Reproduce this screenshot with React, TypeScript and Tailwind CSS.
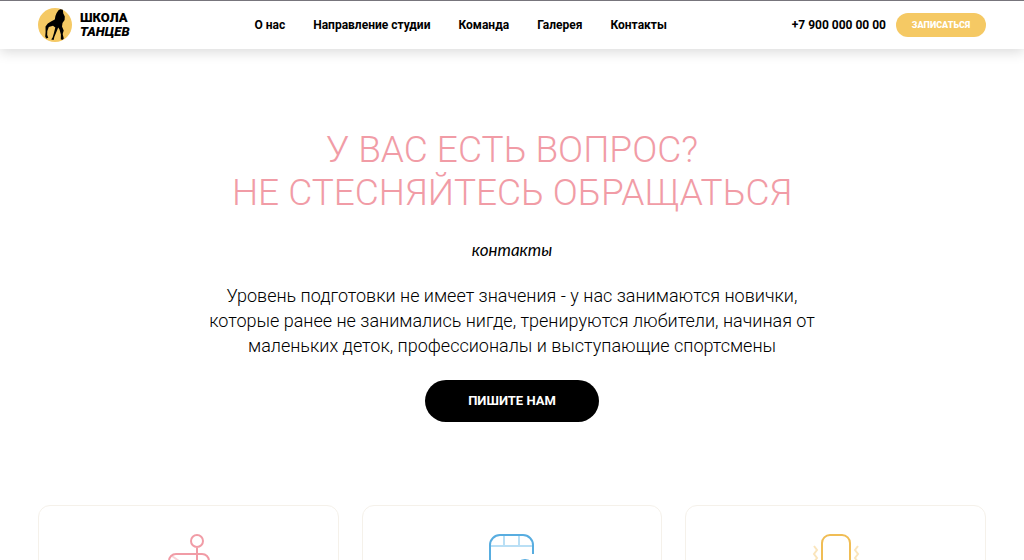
import React from "react";

const navLinks = [
  { label: "О нас", href: "#about" },
  { label: "Направление студии", href: "#directions" },
  { label: "Команда", href: "#team" },
  { label: "Галерея", href: "#gallery" },
  { label: "Контакты", href: "#contacts" },
];

const card =
  "flex h-[220px] flex-1 justify-center rounded-xl border border-[#f5f1ea] bg-white pt-7";

const Logo: React.FC = () => (
  <a href="#top" className="flex items-center gap-2">
    <svg viewBox="0 0 34 34" className="h-[34px] w-[34px]" aria-hidden="true">
      <circle cx="17" cy="17" r="17" fill="#f5c964" />
      <path
        d="M20.500 2.200L22.300 1.300L24.800 1.800L25.300 5.500L26.800 8.500L26.600 12L24.500 15L24 18.500L25.700 22.500L24.700 26L25.800 30.500L24.800 31.800L22.800 31.500L22.900 26.500L21.500 21.500L20.200 19.500L18 25L16.400 28.800L15.600 32L13.200 31.500L14.600 29.500L15.800 25.500L17.300 19.500L15 17.800L10.800 18.900L9.300 23L9.200 27L10.300 29.800L8.200 30.500L7.200 28.500L7.600 24L7.500 18.500L9.800 15.500L13 13.500L16.800 11.500L17.400 8L18.600 5Z"
        fill="#000"
      />
    </svg>
    <span className="flex flex-col text-[13px] leading-[14px] font-black">
      <span>ШКОЛА</span>
      <span className="italic">ТАНЦЕВ</span>
    </span>
  </a>
);

const MapIcon: React.FC = () => (
  <svg width="48" height="56" viewBox="-5 0 48 56" fill="none" aria-hidden="true">
    <path d="M3 22l14 10 22-4M17 32L4 50" stroke="#f9d3d7" strokeWidth="2" />
    <rect x="0" y="20" width="40" height="35" rx="7" stroke="#f19ca6" strokeWidth="2" />
    <path d="M28 14v17" stroke="#f19ca6" strokeWidth="2" />
    <circle cx="28" cy="7" r="6" stroke="#f19ca6" strokeWidth="2" />
  </svg>
);

const CalendarIcon: React.FC = () => (
  <svg width="46" height="56" viewBox="0 0 46 56" fill="none" aria-hidden="true">
    <path d="M15 2v10M30 2v10M2 12h42" stroke="#b9dff5" strokeWidth="2" />
    <path
      d="M44 20v-9a10 10 0 0 0-10-10H11A10 10 0 0 0 1 11v34a10 10 0 0 0 10 10h14"
      stroke="#58ade0"
      strokeWidth="2"
    />
    <circle cx="36" cy="35" r="9" stroke="#58ade0" strokeWidth="2" />
  </svg>
);

const PhoneIcon: React.FC = () => (
  <svg width="48" height="56" viewBox="0 0 48 56" fill="none" aria-hidden="true">
    <rect x="10" y="1" width="28" height="54" rx="8" stroke="#f0bd55" strokeWidth="2" />
    <path
      d="M2 12l3 4-3 4 3 4-3 4 3 4M46 12l-3 4 3 4-3 4 3 4-3 4"
      stroke="#fae5bc"
      strokeWidth="2"
    />
  </svg>
);

const App: React.FC = () => {
  return (
    <div
      id="top"
      className="h-screen overflow-x-hidden overflow-y-auto bg-white font-['Roboto','Liberation_Sans',sans-serif] text-black [scrollbar-width:none]"
    >
      <header className="relative flex h-[49px] items-center justify-between border-t border-[#77757c] bg-white px-[38px] shadow-[0_3px_12px_rgba(0,0,0,0.15)]">
        <Logo />
        <nav className="flex gap-7 text-[12px] leading-4 font-bold">
          {navLinks.map((link) => (
            <a key={link.href} href={link.href}>
              {link.label}
            </a>
          ))}
        </nav>
        <div className="flex items-center gap-[10px]">
          <a href="tel:+79000000000" className="text-[12px] leading-4 font-bold">
            +7 900 000 00 00
          </a>
          <button
            type="button"
            className="h-6 w-[90px] rounded-full bg-[#f5c964] pt-px text-[9px] font-black text-white"
          >
            ЗАПИСАТЬСЯ
          </button>
        </div>
      </header>

      <main>
        <section className="flex flex-col items-center px-[38px] pt-[79px] text-center">
          <h1 className="text-[37px] leading-[43px] font-light text-[#f19ca6]">
            У ВАС ЕСТЬ ВОПРОС?
            <br />
            НЕ СТЕСНЯЙТЕСЬ ОБРАЩАТЬСЯ
          </h1>
          <p className="mt-6 font-['Lato',cursive] text-[17px] leading-6 italic">контакты</p>
          <p className="mt-[21px] text-[18px] leading-[25px] font-light">
            Уровень подготовки не имеет значения - у нас занимаются новички,
            <br />
            которые ранее не занимались нигде, тренируются любители, начиная от
            <br />
            маленьких деток, профессионалы и выступающие спортсмены
          </p>
          <button
            type="button"
            className="mt-[22px] h-[42px] w-[174px] rounded-full bg-black text-[13px] font-bold text-white"
          >
            ПИШИТЕ НАМ
          </button>
        </section>

        <section id="contacts" className="flex gap-[23px] px-[38px] pt-[83px] pb-20">
          <div className={card}>
            <MapIcon />
          </div>
          <div className={card}>
            <CalendarIcon />
          </div>
          <div className={card}>
            <PhoneIcon />
          </div>
        </section>
      </main>
    </div>
  );
};

export default App;
